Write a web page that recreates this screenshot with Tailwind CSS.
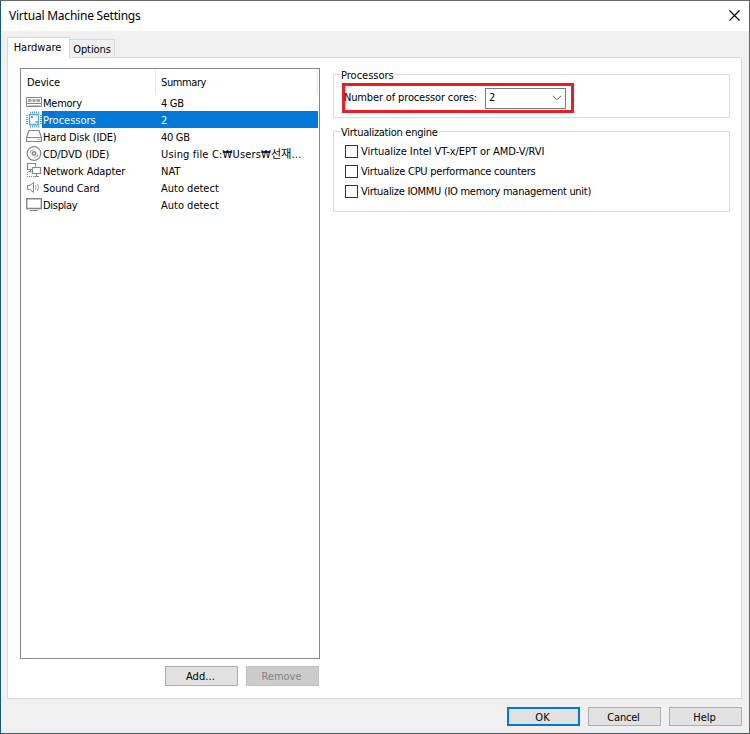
<!DOCTYPE html>
<html lang="en">
<head>
<meta charset="utf-8">
<title>Virtual Machine Settings</title>
<script src="https://cdn.jsdelivr.net/npm/@tailwindcss/browser@4"></script>
</head>
<body class="h-[734px] w-[750px] overflow-hidden font-['DejaVu_Sans_Condensed','DejaVu_Sans','Noto_Sans_CJK_KR',sans-serif] text-[11px] leading-[17px] text-black [font-stretch:condensed]">
<div class="flex h-[734px] w-[750px] flex-col border border-t-[#696969] border-r-[#666666] border-b-[#3f5c68] border-l-[#1b5674] bg-[#f0f0f0]">
  <header class="flex h-[30px] shrink-0 items-center justify-between bg-white pr-[9px] pb-px pl-2">
    <h1 class="font-['Noto_Sans','Open_Sans',sans-serif] text-[12px] tracking-[-0.22px]">Virtual Machine Settings</h1>
    <svg class="size-[11px]" viewBox="0 0 11 11" stroke="#000" stroke-width="1.2"><path d="M.5 .5l10 10M10.500 .5l-10 10"/></svg>
  </header>
  <nav class="flex h-[26px] shrink-0 items-end pl-1.5">
    <div class="z-10 -mb-px flex h-[21px] w-[63px] justify-center border border-b-0 border-[#d9d9d9] bg-white pt-px pr-0.5">Hardware</div>
    <div class="flex h-[18px] w-[45px] justify-center border border-b-0 border-l-0 border-[#d9d9d9] pt-px tracking-[-0.1px]">Options</div>
  </nav>
  <main class="ml-1.5 flex h-[642px] w-[735px] shrink-0 border border-[#d9d9d9] bg-white pt-[10px] pl-3">
    <section class="w-[300px]">
      <div class="h-[591px] border border-[#828790] bg-white">
        <div class="flex h-[25px] pt-px">
          <div class="h-6 w-[135px] border-r border-[#e5e5e5] pt-1 pl-1.5 tracking-[-0.15px]">Device</div>
          <div class="h-6 w-[162px] border-r border-[#e5e5e5] pt-1 pl-[5px] tracking-[-0.4px]">Summary</div>
        </div>
        <div class="flex h-[17px]">
          <svg class="ml-[5px] h-[17px] w-4" viewBox="0 0 16 17" fill="none" stroke="#858585"><path d="M.5 3.500h15v6H.5z M.5 9.500v3h15v-3"/><path d="M2 6.500h3.500M6.500 6.500h3M10.500 6.500H14" stroke="#a5a5a5" stroke-width="3"/><path d="M2 11.500h12" stroke="#ccc"/></svg>
          <div class="w-[119px] pt-px pl-px tracking-[-0.25px]">Memory</div><div class="pt-px tracking-[-0.3px]">4 GB</div>
        </div>
        <div class="flex h-[17px]">
          <svg class="ml-[5px] h-[17px] w-4" viewBox="0 0 16 17" fill="none" stroke="#5aa5dc"><path d="M3.500 3.500h9v10h-9z" stroke-width="1.3"/><path d="M4.500 .5v2M6.500 .5v2M8.500 .5v2M10.500 .5v2M12.500 .5v2M4.500 14.500v2M6.500 14.500v2M8.500 14.500v2M10.500 14.500v2M12.500 14.500v2M0 4.500h2M0 6.500h2M0 8.500h2M0 10.500h2M0 12.500h2M14 4.500h2M14 6.500h2M14 8.500h2M14 10.500h2M14 12.500h2"/><path d="M5 6h2M9.500 11h2" stroke-width="2"/></svg>
          <div class="flex w-[276px] bg-[#0078d7] pt-px text-white"><div class="w-[119px] pl-px">Processors</div><div>2</div></div>
        </div>
        <div class="flex h-[17px]">
          <svg class="ml-[5px] h-[17px] w-4" viewBox="0 0 16 17" fill="none" stroke="#858585" stroke-width="1.2"><path d="M.6 9.500h14.800v4H.6zM.6 9.500L3 2.500h10l2.400 7"/><path d="M11 11.500h3" stroke="#bbb"/></svg>
          <div class="w-[119px] pt-px pl-px tracking-[-0.15px]">Hard Disk (IDE)</div><div class="pt-px tracking-[-0.3px]">40 GB</div>
        </div>
        <div class="flex h-[17px]">
          <svg class="ml-[5px] h-[17px] w-4" viewBox="0 0 16 17" fill="none" stroke="#858585" stroke-width="1.2"><circle cx="8" cy="8.500" r="6.800"/><circle cx="8" cy="8.500" r="1.700" stroke-width="1.500"/><path d="M4 8a4 4 0 0 1 3.500-3.500M12 9a4 4 0 0 1-3.500 3.500" stroke="#aaa"/></svg>
          <div class="w-[119px] pt-px pl-px tracking-[-0.1px]">CD/DVD (IDE)</div><div class="pt-px tracking-[0.17px] whitespace-nowrap">Using file C:₩Users₩선재...</div>
        </div>
        <div class="flex h-[17px]">
          <svg class="ml-[5px] h-[17px] w-4" viewBox="0 0 16 17" fill="none" stroke="#858585" stroke-width="1.200"><path d="M6.500 7.500h-5v-6h8v3M4.500 7.500v2M2.500 9.500h3M6.500 5.500h8v6h-8zM10.500 12v2M8.500 14.500h4.500"/><path d="M1.500 10v5M3 14.500h5" stroke-dasharray="1 1"/></svg>
          <div class="w-[119px] pt-px pl-px tracking-[-0.1px]">Network Adapter</div><div class="pt-px">NAT</div>
        </div>
        <div class="flex h-[17px]">
          <svg class="ml-[5px] h-[17px] w-4" viewBox="0 0 16 17" fill="none" stroke="#858585"><path d="M1.500 6.500h2.500l3.500-3v10l-3.500-3H1.500z"/><path d="M9.500 6.500q1 2 0 4M11.500 5q2 3.500 0 7" stroke="#999"/></svg>
          <div class="w-[119px] pt-px pl-px tracking-[-0.1px]">Sound Card</div><div class="pt-px">Auto detect</div>
        </div>
        <div class="flex h-[17px]">
          <svg class="ml-[5px] h-[17px] w-4" viewBox="0 0 16 17" fill="none" stroke="#858585"><path d="M.7 2.700h14.600v9.800H.7z" stroke-width="1.400"/><path d="M4 14.500h8"/></svg>
          <div class="w-[119px] pt-px pl-px tracking-[-0.3px]">Display</div><div class="pt-px">Auto detect</div>
        </div>
      </div>
      <div class="mt-[7px] flex justify-end gap-2 pr-px">
        <button class="h-5 w-[73px] border border-[#adadad] bg-[#e1e1e1] pr-0.5 tracking-[0.1px]">Add...</button>
        <button class="h-5 w-[73px] border border-[#bfbfbf] bg-[#cccccc] pr-0.5 text-[#838383]">Remove</button>
      </div>
    </section>
    <section class="ml-[13px] w-[397px] pt-1.5">
      <div class="h-[44px] border border-[#dcdcdc]">
        <div class="-mt-2 ml-1.5 flex h-4"><span class="bg-white px-px">Processors</span></div>
        <div class="relative ml-2 flex h-[30px] w-[232px] items-center border-[3px] border-[#ed1c24]">
          <span class="-ml-px w-[141px] pb-0.5 tracking-[-0.15px] whitespace-nowrap">Number of processor cores:</span>
          <div class="flex h-[21px] w-[81px] items-center justify-between border border-[#7a7a7a] px-[3px]">
            <span class="pb-0.5">2</span>
            <svg class="h-[6px] w-[10px]" viewBox="0 0 10 6" fill="none" stroke="#555"><path d="M1 .8l4 4 4-4"/></svg>
          </div>
        </div>
      </div>
      <div class="mt-[13px] h-[81px] border border-[#dcdcdc]">
        <div class="-mt-2 ml-1.5 flex"><span class="bg-white px-px tracking-[-0.27px]">Virtualization engine</span></div>
        <div class="ml-[11px]">
          <label class="flex h-5 items-center gap-[3px] tracking-[-0.06px]"><span class="size-[13px] border border-[#333]"></span><span class="pt-px">Virtualize Intel VT-x/EPT or AMD-V/RVI</span></label>
          <label class="flex h-5 items-center gap-[3px] tracking-[-0.23px]"><span class="size-[13px] border border-[#333]"></span><span class="pt-px">Virtualize CPU performance counters</span></label>
          <label class="flex h-5 items-center gap-[3px] tracking-[-0.28px]"><span class="size-[13px] border border-[#333]"></span><span class="pt-px">Virtualize IOMMU (IO memory management unit)</span></label>
        </div>
      </div>
    </section>
  </main>
  <footer class="flex justify-end gap-2 pt-2 pr-[7px]">
    <button class="h-[19px] w-[73px] border-2 border-[#0078d7] bg-[#e1e1e1] pt-px pr-0.5 leading-[15px]">OK</button>
    <button class="h-[19px] w-[73px] border border-[#adadad] bg-[#e1e1e1] pt-px pr-0.5 tracking-[-0.2px]">Cancel</button>
    <button class="h-[19px] w-[73px] border border-[#adadad] bg-[#e1e1e1] pt-px pr-0.5">Help</button>
  </footer>
</div>
</body>
</html>
